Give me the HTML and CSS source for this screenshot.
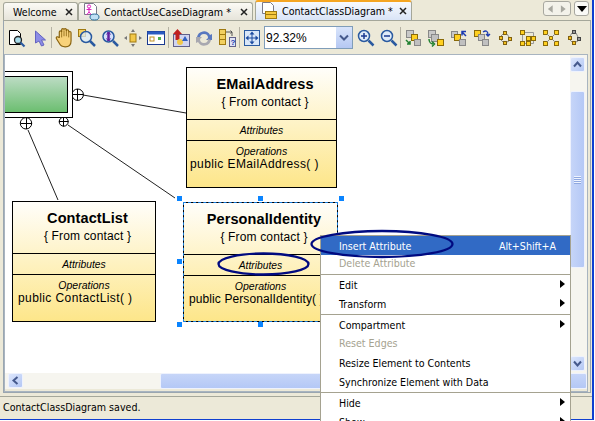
FILE: index.html
```html
<!DOCTYPE html>
<html lang="en">
<head>
<meta charset="utf-8">
<title>ContactClassDiagram</title>
<link rel="stylesheet" href="styles.css">
</head>
<body>
<div class="app">
  <div class="tabs">
    <div class="tab tab-welcome"><span class="tab-label">Welcome</span><svg class="tab-x" width="8" height="8" viewBox="0 0 8 8"><path d="M1 1l6 6M7 1l-6 6" stroke="#222" stroke-width="1.500"/></svg></div>
    <div class="tab tab-usecase">
      <svg class="tab-icon" width="18" height="18" viewBox="0 0 18 18"><path d="M2.500.5h9l3 3v8h-12z" fill="#fff" stroke="#7a7a8a"/><circle cx="7" cy="3.500" r="1.600" fill="none" stroke="#e020c0"/><path d="M7 5v4M4.500 6.500h5M7 9l-2.500 3M7 9l2.500 3" stroke="#e020c0" fill="none"/><ellipse cx="12.500" cy="14" rx="4.500" ry="3" fill="#bfe0f5" stroke="#2c6f9a"/></svg>
      <span class="tab-label">ContactUseCaseDiagram *</span><svg class="tab-x" width="8" height="8" viewBox="0 0 8 8"><path d="M1 1l6 6M7 1l-6 6" stroke="#222" stroke-width="1.500"/></svg></div>
    <div class="tab tab-active">
      <svg class="tab-icon" width="18" height="18" viewBox="0 0 18 18"><path d="M2.500.5h8l3 3v8h-11z" fill="#fff" stroke="#7a7a8a"/><rect x="5.500" y="9.500" width="11" height="7" fill="#f6c840" stroke="#a07a10"/><path d="M5.500 12.500h11" stroke="#a07a10"/></svg>
      <span class="tab-label">ContactClassDiagram *</span><svg class="tab-x" width="8" height="8" viewBox="0 0 8 8"><path d="M1 1l6 6M7 1l-6 6" stroke="#222" stroke-width="1.500"/></svg></div>
    <div class="tab-controls">
      <div class="nav-pair">
        <svg width="14" height="12" viewBox="0 0 14 12"><path d="M9 2v8L4 6z" fill="#a8a8a0"/></svg>
        <svg width="13" height="12" viewBox="0 0 13 12"><path d="M4 2v8l5-4z" fill="#a8a8a0"/></svg>
      </div>
      <div class="nav-drop"><svg width="12" height="8" viewBox="0 0 12 8"><path d="M1 1h10L6 7z" fill="#000"/></svg></div>
    </div>
  </div>

  <div class="editor">
    <div class="toolbar">
      <span class="tool"><svg width="20" height="20" viewBox="0 0 20 20"><path d="M3.500 2.500h8l3 3v11h-11z" fill="#fff" stroke="#000"/><circle cx="12" cy="12" r="3.500" fill="#a8dcea" stroke="#222" stroke-width="1.300"/><path d="M14.500 14.500l4 4" stroke="#2a5aa0" stroke-width="2.200"/></svg></span>
      <span class="tool"><svg width="20" height="20" viewBox="0 0 20 20"><path d="M6.500 3l10 9h-4l2.500 5-2.500 1-2.500-5-3.500 2z" fill="#8c8ce6" stroke="#6464c0"/></svg></span>
      <span class="sep"></span>
      <span class="tool"><svg width="20" height="20" viewBox="2 2 14 17"><path d="M5 10V5.500a1 1 0 0 1 2 0V3.500a1 1 0 0 1 2 0 1 1 0 0 1 2 0V4.500a1 1 0 0 1 2 0V6a1 1 0 0 1 2 0v7c0 3-2 5-5 5-3 0-4-1-5-3L2.500 11c-.5-1.500 1-2 2-1z" fill="#f8d27a" stroke="#8a6410"/><path d="M7 5v5M9 4v5M11 4v5M13 6v4" stroke="#8a6410" stroke-width=".7"/></svg></span>
      <span class="tool"><svg width="20" height="20" viewBox="0 0 20 20"><rect x="1.500" y="1.500" width="7" height="7" fill="#f4d060" stroke="#a07a10"/><circle cx="9" cy="9" r="5.500" fill="#dcecf8" fill-opacity=".75" stroke="#2a5aa0" stroke-width="1.500"/><path d="M13 13l5 5" stroke="#2a5aa0" stroke-width="2.500"/></svg></span>
      <span class="tool"><svg width="20" height="20" viewBox="0 0 20 20"><circle cx="8.500" cy="8.500" r="5.500" fill="#d4e0fa" stroke="#2a5aa0" stroke-width="1.500"/><path d="M13 13l5 5" stroke="#2a5aa0" stroke-width="2.500"/><path d="M8.500 4v9" stroke="#6020a0" stroke-width="2.500"/><path d="M6.500 6.500l2-2.500 2 2.500M6.500 10.500l2 2.500 2-2.500" fill="none" stroke="#6020a0"/></svg></span>
      <span class="tool"><svg width="20" height="20" viewBox="0 0 20 20"><rect x="7" y="6" width="6" height="8" fill="#f2c84a" stroke="#a07a10"/><path d="M10 1l2 3H8zM10 19l-2-3h4zM1 10l3-2v4zM19 10l-3 2V8z" fill="#777"/></svg></span>
      <span class="tool"><svg width="20" height="20" viewBox="0 0 20 20"><rect x="1.500" y="3.500" width="17" height="13" fill="#fff" stroke="#1a3a90"/><rect x="1.500" y="3.500" width="17" height="3" fill="#2a5ac0"/><rect x="4" y="9" width="4" height="4" fill="#fff" stroke="#c09020"/><rect x="12" y="9" width="3" height="3" fill="#50b050"/></svg></span>
      <span class="sep"></span>
      <span class="tool"><svg width="20" height="20" viewBox="0 0 20 20"><rect x="2.500" y="6.500" width="16" height="12" fill="#d0d4f0" stroke="#60608a"/><path d="M6.500 1l4.500 5H8.500v6h-4V6H2z" fill="#c02020"/><circle cx="9" cy="14" r="3" fill="#f2c84a"/><path d="M14 8l3 5h-6z" fill="#3060c0"/></svg></span>
      <span class="tool"><svg width="20" height="20" viewBox="0 0 20 20"><path d="M3 9a7 7 0 0 1 13-2l2-1v6h-6l2-2a4 4 0 0 0-8 0z" fill="#5878c0"/><path d="M17 12a7 7 0 0 1-13 2l-2 1V9h6l-2 2a4 4 0 0 0 8 0z" fill="#a8a8b0"/></svg></span>
      <span class="tool"><svg width="20" height="20" viewBox="0 0 20 20"><rect x="2.500" y="1.500" width="6" height="5" fill="#f2d060" stroke="#a07a10"/><rect x="2.500" y="6.500" width="6" height="5" fill="#f2d060" stroke="#a07a10"/><rect x="2.500" y="11.500" width="6" height="5" fill="#f2d060" stroke="#a07a10"/><rect x="12.500" y="9.500" width="6" height="9" fill="#dfe4f5" stroke="#60608a"/><path d="M9 4h6v4M13.500 2.500L15 4l-1.500 1.500" stroke="#555" fill="none"/><text class="tool-q" x="13.500" y="17">?</text></svg></span>
      <span class="sep"></span>
      <span class="tool"><svg width="20" height="20" viewBox="0 0 20 20"><rect x="2.500" y="2.500" width="15" height="15" fill="#d8e6f8" stroke="#2a5aa0"/><path d="M10 3.500l2.500 3h-5zM10 16.500l-2.500-3h5zM3.500 10l3-2.500v5zM16.500 10l-3 2.500v-5z" fill="#1a4aa0"/><path d="M10 6v8M6 10h8" stroke="#1a4aa0"/></svg></span>
      <div class="combo"><span class="combo-value">92.32%</span><span class="combo-btn"><svg width="10" height="8" viewBox="0 0 10 8"><path d="M1 1.500l4 4 4-4" fill="none" stroke="#45598c" stroke-width="2"/></svg></span></div>
      <span class="tool"><svg width="20" height="20" viewBox="0 0 20 20"><circle cx="8" cy="8" r="5.500" fill="#e0ecf8" stroke="#2a5aa0" stroke-width="1.500"/><path d="M12.500 12.500l5 5" stroke="#2a5aa0" stroke-width="2.500"/><path d="M5 8h6M8 5v6" stroke="#1a3a90" stroke-width="1.500"/></svg></span>
      <span class="tool"><svg width="20" height="20" viewBox="0 0 20 20"><circle cx="8" cy="8" r="5.500" fill="#e0ecf8" stroke="#2a5aa0" stroke-width="1.500"/><path d="M12.500 12.500l5 5" stroke="#2a5aa0" stroke-width="2.500"/><path d="M5 8h6" stroke="#1a3a90" stroke-width="1.500"/></svg></span>
      <span class="sep sep-flush"></span>
      <span class="tool"><svg width="20" height="20" viewBox="0 0 20 20"><rect x="3.500" y="2.500" width="7" height="7" fill="#c8c8c8" stroke="#888"/><rect x="8.500" y="6.500" width="6" height="6" fill="#ffd020" stroke="#8a6a08"/><rect x="11.500" y="11.500" width="6" height="6" fill="#c0c0c0" stroke="#888"/><path d="M3 12l4 4M7 13v3H4" stroke="#208030" stroke-width="1.500" fill="none"/></svg></span>
      <span class="tool"><svg width="20" height="20" viewBox="0 0 20 20"><rect x="2.500" y="2.500" width="7" height="7" fill="#c8c8c8" stroke="#888"/><rect x="5.500" y="6.500" width="7" height="7" fill="#c0c0c0" stroke="#888"/><rect x="11.500" y="11.500" width="6" height="6" fill="#ffd020" stroke="#8a6a08"/><path d="M3 11c0 3 2 5 4 5M6 13.500l2.500 2.500L6 18.500" stroke="#208030" stroke-width="1.500" fill="none"/></svg></span>
      <span class="tool"><svg width="20" height="20" viewBox="0 0 20 20"><rect x="2.500" y="3.500" width="6" height="6" fill="#c8c8c8" stroke="#888"/><rect x="5.500" y="6.500" width="6" height="6" fill="#ffd020" stroke="#8a6a08"/><rect x="10.500" y="11.500" width="6" height="6" fill="#c0c0c0" stroke="#888"/><path d="M17 8l-4-4M13 7.500V3.500h4" stroke="#1a3ab0" stroke-width="1.500" fill="none"/></svg></span>
      <span class="tool"><svg width="20" height="20" viewBox="0 0 20 20"><rect x="2.500" y="2.500" width="6" height="6" fill="#ffd020" stroke="#8a6a08"/><rect x="6.500" y="6.500" width="6" height="6" fill="#c8c8c8" stroke="#888"/><rect x="10.500" y="11.500" width="6" height="6" fill="#c0c0c0" stroke="#888"/><path d="M11 4c3-2 5-1 5 3M14 6l2 2 2-2" stroke="#1a3ab0" stroke-width="1.300" fill="none"/></svg></span>
      <span class="tool"><svg width="20" height="20" viewBox="0 0 20 20"><rect x="8.500" y="3.500" width="3" height="3" fill="#f2c020" stroke="#806010"/><rect x="4.500" y="8.500" width="3" height="3" fill="#f2c020" stroke="#806010"/><rect x="13.500" y="9.500" width="3" height="3" fill="#f2c020" stroke="#806010"/><rect x="8.500" y="13.500" width="3" height="3" fill="#f2c020" stroke="#806010"/><path d="M8 6L6 8M12 6l2 3M6 12l2 2M14 13l-2 1" stroke="#888" fill="none"/></svg></span>
      <span class="tool"><svg width="20" height="20" viewBox="0 0 20 20"><path d="M4.500 4.500h11v11h-11z" fill="none" stroke="#999"/><rect x="2.500" y="2.500" width="4" height="4" fill="#ffd020" stroke="#8a6a08"/><rect x="2.500" y="13.500" width="4" height="4" fill="#ffd020" stroke="#8a6a08"/><rect x="8.500" y="8.500" width="4" height="4" fill="#ffd020" stroke="#8a6a08"/><rect x="13.500" y="8.500" width="4" height="4" fill="#ffd020" stroke="#8a6a08"/><rect x="8.500" y="13.500" width="4" height="4" fill="#ffd020" stroke="#8a6a08"/></svg></span>
      <span class="tool"><svg width="20" height="20" viewBox="0 0 20 20"><rect x="2.500" y="2.500" width="4" height="4" fill="#ffd020" stroke="#8a6a08"/><rect x="13.500" y="2.500" width="4" height="4" fill="#ffd020" stroke="#8a6a08"/><rect x="2.500" y="13.500" width="4" height="4" fill="#ffd020" stroke="#8a6a08"/><rect x="13.500" y="13.500" width="4" height="4" fill="#ffd020" stroke="#8a6a08"/><rect x="8.500" y="8.500" width="3" height="3" fill="#ffd020" stroke="#8a6a08"/><path d="M6 6l2.500 2.500M14 6l-2.500 2.500M6 14l2.500-2.500M14 14l-2.500-2.500" stroke="#888"/></svg></span>
      <span class="tool"><svg width="20" height="20" viewBox="0 0 20 20"><rect x="8.500" y="2.500" width="3" height="3" fill="#999" stroke="#444"/><rect x="4.500" y="8.500" width="3" height="3" fill="#f2c020" stroke="#806010"/><rect x="13.500" y="9.500" width="3" height="3" fill="#999" stroke="#444"/><rect x="8.500" y="13.500" width="3" height="3" fill="#f2c020" stroke="#806010"/><path d="M8 5L6 8M12 5l2 4M6 12l2 2M14 13l-2 1" stroke="#888" fill="none"/></svg></span>
    </div>

    <div class="view">
      <div class="view-main">
        <div class="canvas">
          <svg class="wires" width="565" height="320" viewBox="0 0 565 320">
            <path d="M78 40l103 18M23 75l30 70M63 70l107 73" fill="none" stroke="#222"/>
            <g fill="#fff" stroke="#000">
              <circle cx="72.700" cy="39.700" r="5.700"/><circle cx="21" cy="68.300" r="5.700"/><circle cx="58.700" cy="66.700" r="4.500"/>
            </g>
            <path d="M67 39.500h11.500M72.500 34v11.500M15.500 68.500h11.500M21.500 63v11M54 66.500h9.500M58.500 62v9.500" stroke="#000"/>
          </svg>
          <div class="actor"><div class="actor-fill"></div></div>

          <div class="node node-email">
            <div class="node-head"><div class="node-name">EMailAddress</div><div class="node-from">{ From contact }</div></div>
            <div class="node-attr">Attributes</div>
            <div class="node-ops"><div class="node-ops-title">Operations</div><div class="node-op">public EMailAddress( )</div></div>
          </div>

          <div class="node node-list">
            <div class="node-head"><div class="node-name">ContactList</div><div class="node-from">{ From contact }</div></div>
            <div class="node-attr">Attributes</div>
            <div class="node-ops"><div class="node-ops-title">Operations</div><div class="node-op">public ContactList( )</div></div>
          </div>

          <div class="node node-person">
            <div class="node-head"><div class="node-name">PersonalIdentity</div><div class="node-from">{ From contact }</div></div>
            <div class="node-attr">Attributes</div>
            <div class="node-ops"><div class="node-ops-title">Operations</div><div class="node-op">public PersonalIdentity( )</div></div>
          </div>

          <div class="selection"></div>
          <i class="handle h-tl"></i><i class="handle h-tc"></i><i class="handle h-tr"></i>
          <i class="handle h-ml"></i><i class="handle h-bl"></i><i class="handle h-bc"></i>
        </div>
        <div class="vscroll">
          <div class="sb-btn"><svg width="9" height="7" viewBox="0 0 9 7"><path d="M1 5.500l3.500-4 3.500 4" fill="none" stroke="#45598c" stroke-width="2"/></svg></div>
          <div class="vthumb"><span class="grip"></span></div>
          <div class="sb-btn sb-end"><svg width="9" height="7" viewBox="0 0 9 7"><path d="M1 1.500l3.500 4 3.500-4" fill="none" stroke="#45598c" stroke-width="2"/></svg></div>
        </div>
      </div>
      <div class="hscroll">
        <div class="sb-btn"><svg width="7" height="9" viewBox="0 0 7 9"><path d="M5.500 1l-4 3.500 4 3.500" fill="none" stroke="#45598c" stroke-width="2"/></svg></div>
        <div class="hthumb"></div>
      </div>
    </div>
  </div>

  <div class="status">ContactClassDiagram saved.</div>

  <div class="menu">
    <div class="mi mi-active"><span>Insert Attribute</span><span class="mi-key">Alt+Shift+A</span></div>
    <div class="mi mi-off">Delete Attribute</div>
    <div class="msep"></div>
    <div class="mi">Edit<i class="arrow"></i></div>
    <div class="mi">Transform<i class="arrow"></i></div>
    <div class="msep"></div>
    <div class="mi">Compartment<i class="arrow"></i></div>
    <div class="mi mi-off">Reset Edges</div>
    <div class="mi">Resize Element to Contents</div>
    <div class="mi">Synchronize Element with Data</div>
    <div class="msep"></div>
    <div class="mi">Hide<i class="arrow"></i></div>
    <div class="mi">Show<i class="arrow"></i></div>
  </div>

  <svg class="marks" width="595" height="421" viewBox="0 0 595 421">
    <ellipse cx="263.500" cy="264" rx="45" ry="10.500"/>
    <ellipse cx="382" cy="244" rx="70.500" ry="13"/>
  </svg>
</div>
</body>
</html>
```
FILE: styles.css
```css
* { box-sizing: border-box; }
html, body { margin: 0; padding: 0; }
body { width: 595px; height: 421px; overflow: hidden; background: #fff; font-family: "DejaVu Sans Condensed", "Liberation Sans", sans-serif; font-size: 10.600px; color: #000; }
.app { position: relative; width: 594px; height: 420px; background: #ece9d8; border-right: 2px solid #0f3fd0; border-bottom: 1px solid #0f3fd0; display: flex; flex-direction: column; }

.tabs { display: flex; height: 20px; padding-left: 3px; align-items: flex-end; flex: none; }
.tab { display: flex; align-items: center; height: 18px; background: linear-gradient(#fbfaf5, #e6e4da); border: 1px solid #a5a79a; border-bottom: none; border-radius: 3px 3px 0 0; font-size: 10.600px; position: relative; padding-left: 9px; }
.tab-welcome { width: 75px; }
.tab-usecase { width: 175px; padding-left: 3px; }
.tab-active { width: 157px; height: 20px; padding-left: 4px; background: linear-gradient(#f8fafe, #d9e4f7); border-top: 2px solid #f5a623; margin-left: 2px; }
.tab-icon { flex: none; margin-right: 4px; }
.tab-label { flex: 1; white-space: nowrap; }
.tab-x { flex: none; margin-right: 4px; }
.tab-controls { margin-left: auto; display: flex; gap: 3px; padding: 0 3px 4px 0; }
.nav-pair { display: flex; width: 28px; height: 15px; align-items: center; border: 1px solid #a8a8a0; border-radius: 3px; background: #f3f2ea; }
.nav-drop { display: flex; align-items: center; justify-content: center; width: 15px; height: 15px; border: 1px solid #a8a8a0; border-radius: 3px; background: #fafaf6; }

.editor { flex: none; height: 373px; margin: 0 1px 0 3px; border: 1px solid #9aa6b0; border-top-color: #a5a79a; display: flex; flex-direction: column; }
.toolbar { height: 33px; flex: none; display: flex; align-items: center; }
.tool { flex: none; width: 23px; height: 23px; display: flex; align-items: center; justify-content: center; }
.tool-q { font: bold 8px "Liberation Sans", sans-serif; fill: #1a3ab0; }
.sep { flex: none; width: 1px; height: 21px; margin: 0 0 0 1px; background: #b5b2a3; }
.sep-flush { margin: 0; }
.combo { flex: none; width: 89px; height: 23px; margin: 0 1px; background: #fff; border: 1px solid #7f9db9; display: flex; font: 12px "Liberation Sans", sans-serif; align-items: center; padding-left: 1px; }
.combo-value { flex: 1; }
.combo-btn { width: 16px; height: 21px; background: linear-gradient(#d8e4fb, #b5c8f3); display: flex; align-items: center; justify-content: center; }

.view { flex: 1; min-height: 0; display: flex; flex-direction: column; border: 1px solid #a8b4c0; margin-right: 2px; }
.view-main { flex: 1; min-height: 0; display: flex; }
.canvas { flex: 1; position: relative; background: #fff; overflow: hidden; }
.wires { position: absolute; left: 0; top: 0; }
.actor { position: absolute; left: -10px; top: 16px; width: 78px; height: 47px; background: #fff; border: 1px solid #000; padding: 4px; }
.actor-fill { height: 37px; border: 1px solid #000; background: linear-gradient(#bcdcc4, #6cbe70); }

.node { position: absolute; height: 121px; border: 1px solid #000; display: flex; flex-direction: column; background: linear-gradient(#fffefa, #fde68a); font-family: "Liberation Sans", sans-serif; text-align: center; }
.node-email { left: 181px; top: 12px; width: 151px; }
.node-list { left: 7px; top: 146px; width: 144px; }
.node-person { left: 178px; top: 147px; width: 155px; height: 120px; }
.node-head { height: 52px; border-bottom: 1px solid #000; padding: 7px 0 0 7px; }
.node-name { font-weight: bold; font-size: 14.500px; line-height: 18px; letter-spacing: .1px; }
.node-from { font-size: 12px; line-height: 18px; letter-spacing: .15px; }
.node-attr { height: 21px; border-bottom: 1px solid #000; font-style: italic; font-size: 10.300px; line-height: 21px; }
.node-ops { flex: 1; padding-top: 4px; }
.node-ops-title { font-style: italic; font-size: 10.500px; line-height: 12px; }
.node-op { font-size: 12px; line-height: 15px; white-space: nowrap; letter-spacing: .4px; text-align: left; padding-left: 5px; }
.node-email .node-op { padding-left: 3px; }
.node-person .node-op { letter-spacing: .1px; }

.selection { position: absolute; left: 178px; top: 147px; width: 155px; height: 120px; border: 1px dashed #1a80e0; }
.handle { position: absolute; width: 5px; height: 5px; background: #0a84ff; }
.h-tl { left: 172px; top: 141px; }
.h-tc { left: 253px; top: 141px; }
.h-tr { left: 334px; top: 141px; }
.h-ml { left: 172px; top: 204px; }
.h-bl { left: 172px; top: 267px; }
.h-bc { left: 253px; top: 267px; }

.vscroll { flex: none; width: 17px; padding: 2px 2px 2px 0; background: #f6f5ef; display: flex; flex-direction: column; }
.sb-btn { flex: none; width: 15px; height: 15px; background: linear-gradient(135deg, #dce6fc, #b4c7f4); border: 1px solid #eef2fd; border-radius: 2px; display: flex; align-items: center; justify-content: center; }
.sb-end { margin-top: auto; }
.vthumb { flex: none; height: 177px; margin-top: 19px; background: linear-gradient(90deg, #c6d5f8, #b4c8f6); border: 1px solid #eef2fd; border-radius: 2px; display: flex; align-items: center; justify-content: center; }
.grip { width: 7px; height: 8px; background: repeating-linear-gradient(#eef3fe 0 1px, #8fa8e0 1px 2px); }
.hscroll { flex: none; height: 16px; background: #f6f5ef; display: flex; padding-left: 3px; margin-bottom: 2px; }
.hthumb { flex: 1; margin-left: 137px; background: linear-gradient(#c6d5f8, #b4c8f6); border: 1px solid #eef2fd; border-radius: 2px; }

.status { flex: 1; border-top: 1px solid #a5a79a; margin-top: 3px; padding: 4px 0 0 3px; font-size: 10.600px; }

.menu { position: absolute; left: 320px; top: 235px; width: 251px; height: 200px; background: #fff; border: 1px solid #a5a290; }
.mi { display: flex; align-items: center; height: 19px; padding: 0 0 2px 18px; position: relative; white-space: nowrap; }
.mi-active { background: #316ac5; color: #fff; padding: 0 14px 0 18px; justify-content: space-between; }
.mi-key { margin-left: auto; }
.mi-off { color: #a5a290; padding-bottom: 4px; }
.msep { height: 1px; background: #a5a290; margin: 0 0 1px; }
.arrow { position: absolute; right: 5px; top: 4px; width: 0; height: 0; border-left: 5px solid #000; border-top: 4px solid transparent; border-bottom: 4px solid transparent; }

.marks { position: absolute; left: 0; top: 0; }
.marks ellipse { fill: none; stroke: #000a80; stroke-width: 2.300; }
```
